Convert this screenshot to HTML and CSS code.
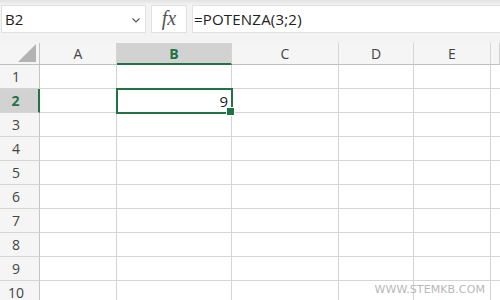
FILE: index.html
```html
<!DOCTYPE html>
<html lang="it">
  <head>
    <meta charset="UTF-8" />
    <meta name="viewport" content="width=device-width, initial-scale=1" />
    <title>POTENZA</title>
    <link rel="stylesheet" href="styles.css">
  </head>
  <body>

    <div class="toolbar">
      <div class="name-box">
        <span>B2</span>
        <svg class="chevron" width="8" height="5" viewBox="0 0 8 5"><polyline points="0.5,0.5 4,4 7.5,0.5" fill="none" stroke="#555" stroke-width="1.2"/></svg>
      </div>
      <div class="fx-box"><i>fx</i></div>
      <div class="formula">=POTENZA(3;2)</div>
    </div>

    <div class="sheet">
      <div class="corner"><span class="tri"></span></div>
      <div class="col-head">A</div>
      <div class="col-head active">B</div>
      <div class="col-head">C</div>
      <div class="col-head">D</div>
      <div class="col-head">E</div>
      <div class="col-head"></div>

      <div class="row-head">1</div><div class="cell"></div><div class="cell"></div><div class="cell"></div><div class="cell"></div><div class="cell"></div><div class="cell"></div>
      <div class="row-head active">2</div><div class="cell"></div><div class="cell selected">9</div><div class="cell"></div><div class="cell"></div><div class="cell"></div><div class="cell"></div>
      <div class="row-head">3</div><div class="cell"></div><div class="cell"></div><div class="cell"></div><div class="cell"></div><div class="cell"></div><div class="cell"></div>
      <div class="row-head">4</div><div class="cell"></div><div class="cell"></div><div class="cell"></div><div class="cell"></div><div class="cell"></div><div class="cell"></div>
      <div class="row-head">5</div><div class="cell"></div><div class="cell"></div><div class="cell"></div><div class="cell"></div><div class="cell"></div><div class="cell"></div>
      <div class="row-head">6</div><div class="cell"></div><div class="cell"></div><div class="cell"></div><div class="cell"></div><div class="cell"></div><div class="cell"></div>
      <div class="row-head">7</div><div class="cell"></div><div class="cell"></div><div class="cell"></div><div class="cell"></div><div class="cell"></div><div class="cell"></div>
      <div class="row-head">8</div><div class="cell"></div><div class="cell"></div><div class="cell"></div><div class="cell"></div><div class="cell"></div><div class="cell"></div>
      <div class="row-head">9</div><div class="cell"></div><div class="cell"></div><div class="cell"></div><div class="cell"></div><div class="cell"></div><div class="cell"></div>
      <div class="row-head">10</div><div class="cell"></div><div class="cell"></div><div class="cell"></div><div class="cell"></div><div class="cell"></div><div class="cell"></div>
    </div>

    <div class="watermark">WWW.STEMKB.COM</div>

  </body>
</html>
```

FILE: styles.css
```css
*{
  box-sizing: border-box;
}

body{
  margin: 0;
  width: 500px;
  height: 300px;
  overflow: hidden;
  position: relative;
  background: #FFFFFF;
  font-family: "Open Sans", "Noto Sans", sans-serif;
  color: #333333;
}

.toolbar{
  height: 43px;
  display: flex;
  gap: 5px;
  padding: 5px 0 0 1px;
  background: linear-gradient(#e2e2e2, #f3f3f3 5px);
}

.toolbar > div{
  height: 28px;
  background: #FFFFFF;
  border: 1px solid #e1e1e1;
}

.name-box{
  width: 145px;
  display: flex;
  align-items: center;
  justify-content: space-between;
  padding: 0 5px 0 3px;
  font-size: 15px;
  color: #222222;
}

.chevron{
  margin-top: 2px;
}

.fx-box{
  width: 36px;
  display: flex;
  align-items: center;
  justify-content: center;
  padding-bottom: 2px;
  font-family: "Liberation Serif", serif;
  font-size: 20px;
  color: #555555;
}

.formula{
  flex: 1;
  display: flex;
  align-items: center;
  padding-left: 1px;
  font-size: 15px;
  letter-spacing: 0.2px;
  color: #222222;
  border-right: none !important;
}

.sheet{
  display: grid;
  grid-template-columns: 40px 77px 115px 107px 75px 77px 1fr;
  grid-template-rows: 22px repeat(10, 24px);
}

.corner,
.col-head{
  background: #f5f5f5;
  border-right: 1px solid #d4d4d4;
  border-bottom: 1px solid #bfbfbf;
}

.corner{
  position: relative;
  border-right-color: #c4c4c4;
}

.tri{
  position: absolute;
  right: 3px;
  bottom: 2px;
  width: 0;
  height: 0;
  border-left: 18px solid transparent;
  border-bottom: 18px solid #b3b3b3;
}

.col-head{
  display: flex;
  align-items: center;
  justify-content: center;
  font-size: 14px;
  color: #444444;
}

.col-head.active{
  background: #d2d2d2;
  border-bottom: 2px solid #217346;
  color: #217346;
  font-weight: bold;
}

.col-head:last-child{
  border-right: none;
}

.row-head{
  display: flex;
  align-items: center;
  justify-content: center;
  padding-right: 7px;
  background: #f5f5f5;
  border-right: 1px solid #c4c4c4;
  border-bottom: 1px solid #d4d4d4;
  font-size: 14px;
  color: #444444;
}

.row-head.active{
  background: #d2d2d2;
  border-right: 2px solid #217346;
  color: #217346;
  font-weight: bold;
}

.cell{
  border-right: 1px solid #d4d4d4;
  border-bottom: 1px solid #d4d4d4;
  font-size: 15px;
  color: #222222;
}

.cell:nth-child(7n){
  border-right: none;
}

.cell.selected{
  position: relative;
  z-index: 1;
  display: flex;
  align-items: center;
  justify-content: flex-end;
  padding-right: 3px;
  outline: 2px solid #217346;
  outline-offset: -1px;
}

.cell.selected::after{
  content: "";
  position: absolute;
  right: -4px;
  bottom: -4px;
  width: 7px;
  height: 7px;
  background: #217346;
  border: 1px solid #FFFFFF;
}

.watermark{
  position: absolute;
  right: 15px;
  bottom: 4px;
  font-family: "DejaVu Sans", sans-serif;
  font-size: 11px;
  letter-spacing: 0.1px;
  color: #b8b8b8;
}
```
